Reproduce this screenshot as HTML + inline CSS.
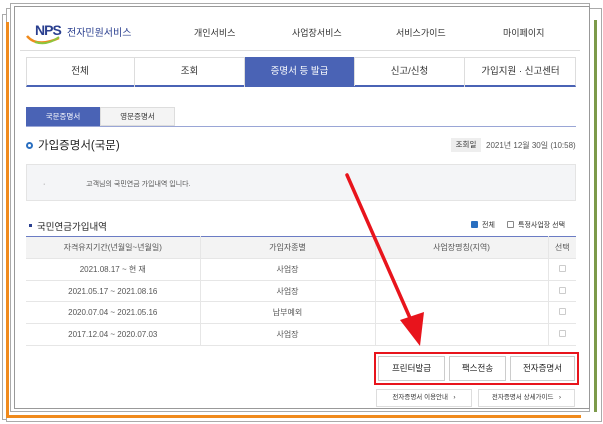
<!DOCTYPE html><html><head><meta charset="utf-8"><style>
*{margin:0;padding:0;box-sizing:border-box}
body{width:603px;height:424px;background:#fff;position:relative;overflow:hidden;font-family:"Liberation Sans","Noto Sans CJK KR",sans-serif;color:#333}
.a{position:absolute}
.fr{position:absolute;border:1px solid #aaa;background:#fff}
.c{text-align:center}
.tab{position:absolute;top:57px;height:30px;line-height:30px;text-align:center;font-size:9.5px;border-right:1px solid #ddd;color:#333}
td{font-size:8px;color:#555;text-align:center;border-right:1px solid #e6e6e6;border-bottom:1px solid #e6e6e6}
.cb{display:inline-block;width:7px;height:7px;border:1px solid #ccc;border-radius:1px}
.btn{position:absolute;top:356px;height:25px;border:1px solid #ccc;background:#fff;font-size:8.5px;line-height:23px;text-align:center;color:#222}
.lk{position:absolute;top:389px;height:18px;border:1px solid #ddd;font-size:6.5px;line-height:16px;text-align:center;color:#333}
</style></head><body>
<div class="fr" style="left:2px;top:14px;width:595px;height:406px"></div>
<div class="fr" style="left:6px;top:8px;width:596px;height:414px"></div>
<div class="a" style="left:6px;top:22px;width:3px;height:396px;background:#f08a1c"></div>
<div class="a" style="left:6px;top:415px;width:575px;height:3px;background:#f08a1c"></div>
<div class="a" style="left:594px;top:20px;width:3px;height:392px;background:#7c9a4a"></div>
<div class="fr" style="left:10px;top:3px;width:580px;height:409px"></div>
<div class="fr" style="left:14px;top:6px;width:576px;height:403px;border-color:#999"></div>
<svg class="a" style="left:25px;top:26px" width="40" height="22"><path d="M2 10 Q12 22 34 12" stroke="#f08a1c" stroke-width="2.5" fill="none"/><path d="M10 16 Q22 20 34 11" stroke="#8cc63f" stroke-width="2" fill="none"/></svg>
<div class="a" style="left:35px;top:22px;font-size:14px;font-weight:bold;color:#2a3f8f;letter-spacing:-1px">NPS</div>
<div class="a" style="left:67px;top:24px;font-size:10px;color:#2a3f8f">전자민원서비스</div>
<div class="a" style="left:194px;top:26px;font-size:9px">개인서비스</div>
<div class="a" style="left:292px;top:26px;font-size:9px">사업장서비스</div>
<div class="a" style="left:396px;top:26px;font-size:9px">서비스가이드</div>
<div class="a" style="left:503px;top:26px;font-size:9px">마이페이지</div>
<div class="a" style="left:20px;top:50px;width:560px;height:1px;background:#ddd"></div>
<div class="a" style="left:26px;top:57px;width:550px;height:30px;border:1px solid #ddd;border-bottom:2px solid #4a63b5"></div>
<div class="tab" style="left:26px;width:109px">전체</div>
<div class="tab" style="left:135px;width:110px">조회</div>
<div class="tab" style="left:245px;width:110px;background:#4a63b5;color:#fff;height:29px">증명서 등 발급</div>
<div class="tab" style="left:355px;width:110px">신고/신청</div>
<div class="tab" style="left:465px;width:111px;border-right:none">가입지원 · 신고센터</div>
<div class="a c" style="left:26px;top:107px;width:74px;height:19px;background:#4a63b5;color:#fff;font-size:7.5px;line-height:19px">국문증명서</div>
<div class="a c" style="left:100px;top:107px;width:75px;height:19px;background:#f4f4f4;border:1px solid #ddd;font-size:7.5px;line-height:17px">영문증명서</div>
<div class="a" style="left:26px;top:126px;width:550px;height:1px;background:#9aa6d6"></div>
<div class="a" style="left:26px;top:142px;width:7px;height:7px;border:2px solid #2a6fc0;border-radius:50%"></div>
<div class="a" style="left:38px;top:137px;font-size:11.5px;color:#222">가입증명서(국문)</div>
<div class="a c" style="left:451px;top:138px;width:30px;height:14px;background:#eee;font-size:7.5px;line-height:14px">조회일</div>
<div class="a" style="left:486px;top:140px;font-size:8px;color:#555">2021년 12월 30일 (10:58)</div>
<div class="a" style="left:26px;top:164px;width:550px;height:37px;background:#f4f5f7;border:1px solid #e4e4e4"></div>
<div class="a" style="left:43px;top:179px;font-size:7px;color:#555">·&nbsp;&nbsp;&nbsp;&nbsp;&nbsp;&nbsp;&nbsp;&nbsp;&nbsp;&nbsp;&nbsp;&nbsp;&nbsp;&nbsp;&nbsp;&nbsp;&nbsp;&nbsp;&nbsp;&nbsp;&nbsp;고객님의 국민연금 가입내역 입니다.</div>
<div class="a" style="left:29px;top:224px;width:3px;height:3px;background:#2a3f8f"></div>
<div class="a" style="left:37px;top:219px;font-size:9.5px;color:#222">국민연금가입내역</div>
<div class="a" style="left:471px;top:221px;width:7px;height:7px;background:#2a6fc0;border-radius:1px"></div>
<div class="a" style="left:482px;top:220px;font-size:7px">전체</div>
<div class="a" style="left:507px;top:221px;width:7px;height:7px;border:1px solid #888;border-radius:1px"></div>
<div class="a" style="left:518px;top:220px;font-size:7px">특정사업장 선택</div>
<table class="a" style="left:26px;top:236px;width:550px;border-collapse:collapse;border-top:1px solid #6b7cc4">
<tr style="height:22px;background:#f3f3f3"><td style="width:174px">자격유지기간(년월일~년월일)</td><td style="width:175px">가입자종별</td><td style="width:173px">사업장명칭(지역)</td><td style="border-right:none">선택</td></tr>
<tr style="height:22px"><td>2021.08.17 ~ 현 재</td><td>사업장</td><td></td><td style="border-right:none"><span class="cb"></span></td></tr>
<tr style="height:21px"><td>2021.05.17 ~ 2021.08.16</td><td>사업장</td><td></td><td style="border-right:none"><span class="cb"></span></td></tr>
<tr style="height:22px"><td>2020.07.04 ~ 2021.05.16</td><td>납부예외</td><td></td><td style="border-right:none"><span class="cb"></span></td></tr>
<tr style="height:22px"><td>2017.12.04 ~ 2020.07.03</td><td>사업장</td><td></td><td style="border-right:none"><span class="cb"></span></td></tr>
</table>
<div class="a" style="left:374px;top:352px;width:205px;height:33px;border:2px solid #e8141c"></div>
<div class="btn" style="left:378px;width:67px">프린터발급</div>
<div class="btn" style="left:449px;width:57px">팩스전송</div>
<div class="btn" style="left:510px;width:65px">전자증명서</div>
<div class="lk" style="left:376px;width:96px">전자증명서 이용안내 &nbsp;&nbsp;›</div>
<div class="lk" style="left:478px;width:97px">전자증명서 상세가이드 &nbsp;&nbsp;›</div>
<svg class="a" style="left:0;top:0" width="603" height="424"><line x1="347" y1="175" x2="410" y2="318" stroke="#e8141c" stroke-width="3.5" stroke-linecap="round"/><polygon points="400,320 424,312 420,346" fill="#e8141c"/></svg>
</body></html>
